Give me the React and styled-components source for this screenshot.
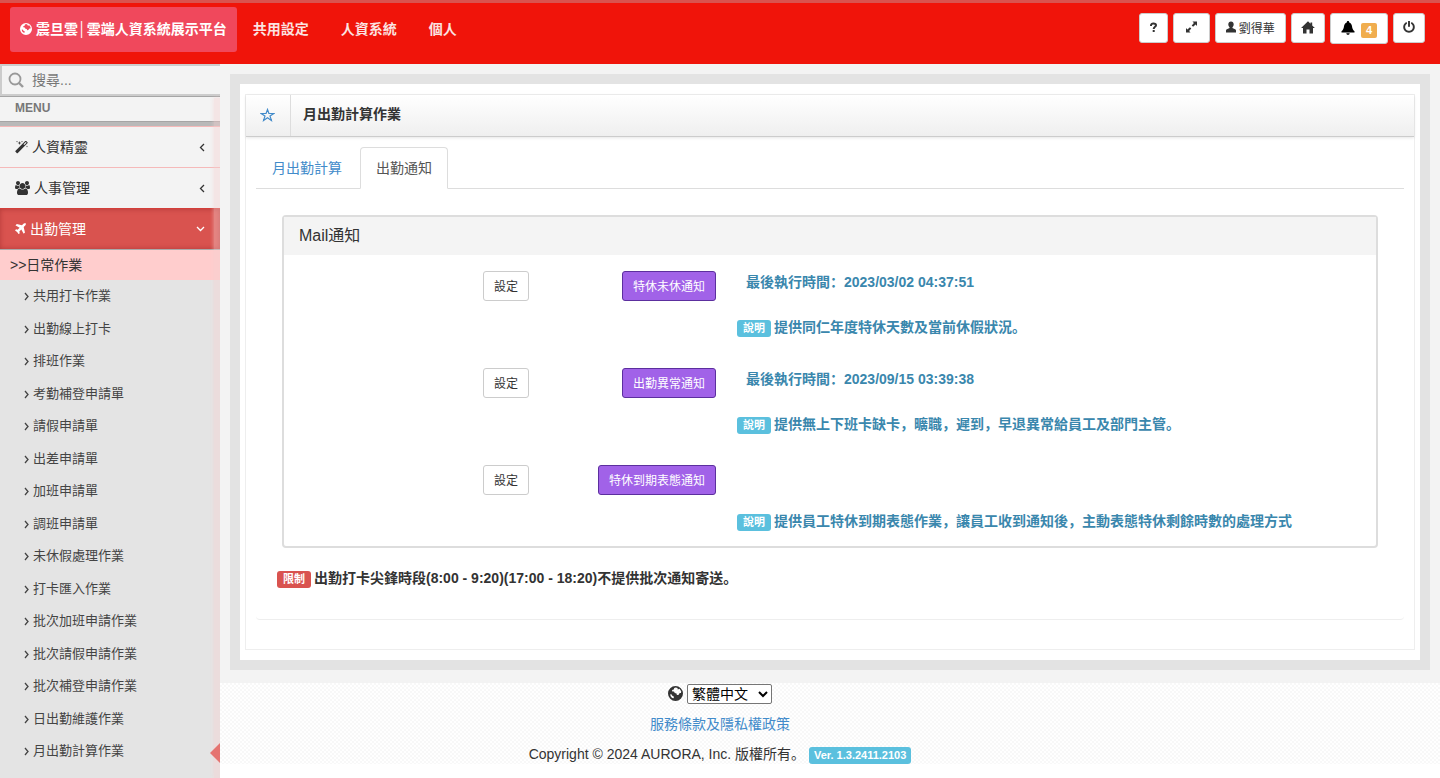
import styled, { createGlobalStyle } from 'styled-components'
import { useState } from 'react'

const GlobalStyle = createGlobalStyle`
  * {
    box-sizing: border-box;
  }
  body {
    margin: 0;
    background: #fff;
    color: #333;
    font-family: "Liberation Sans", "Noto Sans CJK SC", sans-serif;
    font-size: 14px;
    line-height: 20px;
  }
  button, input, select {
    font-family: inherit;
  }
  a {
    color: #428bca;
    text-decoration: none;
  }
  ul {
    list-style: none;
    margin: 0;
    padding: 0;
  }
`

const Page = styled.div`
  height: 100vh;
  display: flex;
  flex-direction: column;
  overflow: hidden;
`

const TopBar = styled.header`
  display: flex;
  flex: none;
  justify-content: space-between;
  align-items: flex-start;
  height: 64px;
  padding: 4px 15px 0 10px;
  border-top: 3px solid #d9534f;
  background: #f0140a;
`

const TopNav = styled.nav`
  display: flex;
  align-items: center;
`

const Brand = styled.a`
  display: flex;
  align-items: center;
  gap: 4px;
  height: 45px;
  padding: 0 10px 2px;
  border-radius: 3px;
  background: #f0485c;
  color: #fff;
  font-weight: bold;
`

const NavLink = styled.a`
  padding: 0 16px 2px;
  color: #fbe3e1;
  font-weight: bold;
`

const Tools = styled.div`
  display: flex;
  align-items: flex-start;
  gap: 5px;
  padding-top: 6px;
`

const Button = styled.button`
  display: inline-flex;
  align-items: center;
  justify-content: center;
  gap: 3px;
  height: ${props => props.$tall ? 31 : 30}px;
  padding: 0 ${props => props.$pad || 9}px 2px;
  border: 1px solid ${props => props.$primary ? '#5c2f9e' : '#ccc'};
  border-radius: 3px;
  background: ${props => props.$primary ? '#a162e8' : '#fff'};
  color: ${props => props.$primary ? '#fff' : props.$tall ? '#000' : '#333'};
  font-size: 12px;
  white-space: nowrap;
  cursor: pointer;
`

const Count = styled.span`
  margin: 5px 0 0 3px;
  padding: 0 5px;
  border-radius: 2px;
  background: #f0ad4e;
  color: #fff;
  font-size: 11px;
  font-weight: bold;
  line-height: 15px;
`

const Body = styled.div`
  display: flex;
  flex: 1;
  min-height: 0;
`

const Sidebar = styled.aside`
  position: relative;
  flex: none;
  width: 220px;
  background: #e4e4e4;
`

const EdgeShade = styled.div`
  position: absolute;
  top: 34px;
  right: 0;
  bottom: 0;
  width: 6px;
  background: rgba(245, 208, 208, 0.4);
  box-shadow: 0 0 4px rgba(245, 208, 208, 0.6);
  clip-path: inset(-4px 0 0 -4px);
  pointer-events: none;
`

const Search = styled.label`
  display: flex;
  align-items: center;
  gap: 7px;
  height: 32px;
  padding-left: 6px;
  border: solid #ccc;
  border-width: 2px 0 2px 2px;
  background: #f3f3f3;

  input {
    width: 160px;
    padding: 0;
    border: 0;
    outline: 0;
    background: none;
    font-size: 14px;
  }
  input::placeholder {
    color: #777;
  }
`

const MenuTitle = styled.div`
  height: 26px;
  border: solid #a5a5a5;
  border-width: 1px 0;
  padding-left: 15px;
  background: #f3f3f3;
  color: #777;
  font-size: 12px;
  font-weight: bold;
  line-height: 23px;
`

const MenuDivider = styled.div`
  height: 4px;
  background: #b9b9b9;
`

const MenuButton = styled.button`
  display: flex;
  align-items: center;
  gap: 4px;
  width: 100%;
  height: 41px;
  padding: 0 15px;
  border: 0;
  border-top: 1px solid ${props => props.$open ? '#d43f3a' : '#f5b9b9'};
  background: ${props => props.$open ? '#d9534f' : '#f3f3f3'};
  box-shadow: ${props => props.$open ? 'inset 0 0 5px rgba(120, 20, 20, 0.4)' : 'none'};
  color: ${props => props.$open ? '#fff' : '#333'};
  font-size: 14px;
  line-height: 20px;
  text-align: left;
  cursor: pointer;

  span {
    flex: 1;
  }
`

const GroupTitle = styled.div`
  height: 31px;
  padding-left: 10px;
  border-top: 1px solid #aaa;
  background: #ffcdcd;
  line-height: 31px;
`

const SubLink = styled.a`
  display: flex;
  align-items: center;
  gap: 4px;
  height: 20px;
  margin-bottom: ${props => props.$short ? 12 : 13}px;
  padding-left: 24px;
  color: #444;
  font-size: 13px;
`

const SubMenu = styled.ul`
  padding-top: 6px;
`

const Pointer = styled.div`
  position: absolute;
  right: 0;
  bottom: 15px;
  border: solid transparent;
  border-width: 10px 10px 10px 0;
  border-right-color: #e57370;
`

const Main = styled.main`
  flex: 1;
  min-width: 0;
`

const Content = styled.div`
  padding: 10px 10px 13px;
  background: #f3f3f3;
`

const Frame = styled.div`
  padding: 10px 5px;
  border: 10px solid #e3e3e3;
  background: #fff;
`

const Widget = styled.section`
  border: 1px solid #eee;
  padding-bottom: 29px;
`

const WidgetHeader = styled.header`
  display: flex;
  height: 42px;
  border-bottom: 1px solid #ccc;
  background: linear-gradient(#fff, #efefef);
  box-shadow: 0 1px 3px rgba(0, 0, 0, 0.1);
`

const StarButton = styled.button`
  display: flex;
  align-items: center;
  justify-content: center;
  width: 45px;
  padding: 0 2px 2px 0;
  border: 0;
  border-right: 1px solid #ddd;
  background: none;
  color: #428bca;
  cursor: pointer;
`

const WidgetTitle = styled.h1`
  margin: 0;
  padding-left: 12px;
  font-size: 14px;
  line-height: 38px;
`

const Tabs = styled.div`
  display: flex;
  margin: 10px 10px 0;
  border-bottom: 1px solid #ddd;
`

const Tab = styled.button`
  height: 42px;
  margin: 0 2px -1px 0;
  padding: 0 15px 2px;
  border: 1px solid ${props => props.$active ? '#ddd' : 'transparent'};
  border-bottom-color: ${props => props.$active ? '#fff' : 'transparent'};
  border-radius: 4px 4px 0 0;
  background: ${props => props.$active ? '#fff' : 'none'};
  color: ${props => props.$active ? '#555' : '#428bca'};
  font-size: 14px;
  cursor: pointer;
`

const TabBody = styled.div`
  margin: 0 10px;
  padding: 26px 26px 31px;
  border-bottom: 1px solid #eee;
  border-radius: 0 0 4px 4px;
`

const Panel = styled.section`
  border: 2px solid #ddd;
  border-radius: 4px;
`

const PanelTitle = styled.h2`
  margin: 0;
  padding: 0 15px;
  background: #f4f4f4;
  font-size: 16px;
  font-weight: normal;
  line-height: 38px;
`

const NoticeRow = styled.div`
  display: grid;
  grid-template-columns: 245px 187px 1fr;
  height: 97px;
  padding-top: 16px;
`

const Cell = styled.div`
  display: flex;
  align-items: flex-start;
  justify-content: flex-end;
`

const Info = styled.div`
  padding-left: 21px;
  color: #3a87ad;
  font-weight: bold;
`

const LastRun = styled.p`
  height: 20px;
  margin: 1px 0 25px 9px;
`

const Description = styled.p`
  margin: 0;
`

const Label = styled.span`
  display: inline-block;
  margin-right: ${props => props.$version ? 0 : 3}px;
  padding: 0 ${props => props.$version ? 5 : 6}px;
  border-radius: 3px;
  background: ${props => props.$danger ? '#d9534f' : '#5bc0de'};
  color: #fff;
  font-size: 11px;
  font-weight: bold;
  line-height: 17px;
`

const Limit = styled.p`
  margin: 20px 0 0 -5px;
  font-weight: bold;
`

const Footer = styled.footer`
  display: flex;
  flex-direction: column;
  align-items: center;
  gap: 10px;
  padding-right: 220px;
  background: repeating-conic-gradient(#f8f8f8 0 25%, #fff 0 50%) 0 0 / 4px 4px;
`

const Language = styled.label`
  display: flex;
  align-items: center;
  gap: 4px;
  height: 21px;

  select {
    width: 85px;
    height: 20px;
    padding: 0;
    border: 1px solid #767676;
    border-radius: 2px;
    background: #fff;
    color: #000;
    font-size: 14px;
  }
`

const ICONS = {
  magic: { width: 13, height: 13, viewBox: '64 64 1664 1664', path: 'M1254 581l293-293-107-107-293 293zm447-293q0 27-18 45l-1286 1286q-18 18-45 18t-45-18l-198-198q-18-18-18-45t18-45l1286-1286q18-18 45-18t45 18l198 198q18 18 18 45zm-1351-190l98 30-98 30-30 98-30-98-98-30 98-30 30-98zm350 162l196 60-196 60-60 196-60-196-196-60 196-60 60-196zm930 478l98 30-98 30-30 98-30-98-98-30 98-30 30-98zm-640-640l98 30-98 30-30 98-30-98-98-30 98-30 30-98z' },
  users: { width: 15, height: 14, viewBox: '0 0 1920 1792', path: 'M593 896q-162 5-265 128h-134q-82 0-138-40.500t-56-118.500q0-353 124-353 6 0 43.500 21t97.500 42.500 119 21.500q67 0 133-23-5 37-5 66 0 139 81 256zm1071 637q0 120-73 189.500t-194 69.500h-874q-121 0-194-69.500t-73-189.500q0-53 3.500-103.500t14-109 26.500-108.500 43-97.500 62-81 85.500-53.500 111.500-20q10 0 43 21.500t73 48 107 48 135 21.500 135-21.500 107-48 73-48 43-21.500q61 0 111.500 20t85.500 53.500 62 81 43 97.500 26.500 108.500 14 109 3.500 103.500zm-1024-1277q0 106-75 181t-181 75-181-75-75-181 75-181 181-75 181 75 75 181zm704 384q0 159-112.500 271.500t-271.500 112.500-271.500-112.500-112.500-271.500 112.500-271.500 271.500-112.500 271.500 112.500 112.500 271.500zm576 225q0 78-56 118.500t-138 40.500h-134q-103-123-265-128 81-117 81-256 0-29-5-66 66 23 133 23 59 0 119-21.500t97.500-42.500 43.500-21q124 0 124 353zm-128-609q0 106-75 181t-181 75-181-75-75-181 75-181 181-75 181 75 75 181z' },
  plane: { width: 11, height: 12, viewBox: '186 120 1422 1536', path: 'M1568 160q44 52 12 148t-108 172l-161 161 160 696q5 19-12 33l-128 96q-7 6-19 6-4 0-7-1-15-3-21-16l-279-508-259 259 53 194q5 17-8 31l-96 96q-9 9-23 9h-2q-15-2-24-13l-189-252-252-189q-11-7-13-23-1-13 9-25l96-97q9-9 23-9 6 0 8 1l194 53 259-259-508-279q-14-8-17-24-2-16 9-27l128-128q14-13 30-8l665 159 160-160q76-76 172-108t148 12z' },
  power: { width: 12, height: 12, viewBox: '100 100 1592 1592', path: 'M1664 896q0 156-61 298t-164 245-245 164-298 61-298-61-245-164-164-245-61-298q0-182 80.500-343t226.500-270q43-32 95.500-25t83.500 50q32 42 24.500 94.500t-49.500 84.500q-98 74-151.500 181t-53.500 228q0 104 40.500 198.500t109.500 163.500 163.500 109.500 198.500 40.500 198.500-40.500 163.500-109.500 109.500-163.500 40.500-198.500q0-121-53.500-228t-151.500-181q-42-32-49.500-84.500t24.500-94.500q31-43 84-50t95 25q146 109 226.500 270t80.500 343zm-640-768v640q0 52-38 90t-90 38-90-38-38-90v-640q0-52 38-90t90-38 90 38 38 90z' },
  user: { width: 10, height: 12, viewBox: '0 0 10 12', path: 'M5 .5c1.600 0 2.700 1.200 2.700 2.800 0 1.300-.6 2.500-1.300 3.200v.5l2.700 1.200c.6.300.9.700.9 1.300V11.500H0V9.500c0-.6.300-1 .9-1.300l2.700-1.200v-.5C2.900 5.800 2.300 4.600 2.300 3.300 2.300 1.700 3.400.5 5 .5z' },
  home: { width: 14, height: 13, viewBox: '0 0 14 13', path: 'M7 .3l2.500 2.400V1.500h1.700v2.900L13.900 7H12v5.500H8.500V8.500h-3v4H2V7H.1z' },
  bell: { width: 14, height: 14, viewBox: '0 0 14 14', path: 'M7 0c.7 0 1.200.5 1.200 1.200v.3c1.700.5 2.500 2 2.800 3.800.3 2.400.8 3.500 2.500 5v1.200H.5v-1.200c1.700-1.500 2.200-2.600 2.500-5 .3-1.800 1.100-3.300 2.800-3.800v-.3C5.800.5 6.300 0 7 0zM5.300 12.200h3.400c-.2 1-.8 1.500-1.700 1.500s-1.500-.5-1.700-1.500z' },
  expand: { width: 13, height: 12, viewBox: '0 0 13 12', path: 'M7.500.5H12V5l-1.400-1.400-2.500 2.200-1.400-1.400L8.900 2zM5.500 11.500H1V7l1.400 1.400 2.500-2.200 1.400 1.400L4.100 10z' },
  globe: { width: 15, height: 15, viewBox: '0 0 15 15', path: 'M7.500 0a7.500 7.500 0 1 1 0 15 7.500 7.500 0 0 1 0-15zM7.800 1.400L6.200 2l-.4 1.400-1.800.6.300 1.400 1.600.2.900 1.500 1.700.5.400 1.500 1.500-.2 1.300-1.900 1.300.1.200-1.900-1.700-2.400-1.600.6-.5-1.300zM2.200 8.200l.4 2 1.500 1.700 1.500.3.400-1.500-1.700-1-.6-1.200z' },
}

const Icon = ({ name, size }) => {
    const { width, height, viewBox, path } = ICONS[name]
    return (
        <svg width={size || width} height={size || height} viewBox={viewBox} fill="currentColor" fillRule="evenodd" aria-hidden="true">
            <path d={path}/>
        </svg>
    )
}

const CHEVRONS = {
  left: [6, 9, 'M5 1L1.500 4.500 5 8'],
  right: [5, 9, 'M1 1l3 3.500L1 8'],
  down: [9, 6, 'M1 1l3.500 3.500L8 1'],
}

const Chevron = ({ to }) => {
    const [width, height, path] = CHEVRONS[to]
    return (
        <svg width={width} height={height} viewBox={`0 0 ${width} ${height}`} fill="none" stroke="currentColor" strokeWidth="1.300" aria-hidden="true">
            <path d={path}/>
        </svg>
    )
}

const SearchIcon = () => (
    <svg width="17" height="17" viewBox="0 0 17 17" fill="none" stroke="#999" aria-hidden="true">
        <circle cx="7" cy="7" r="5.500" strokeWidth="1.800"/>
        <path d="M11 11l4 4" strokeWidth="2.400"/>
    </svg>
)

const QuestionIcon = () => (
    <svg width="9" height="12" viewBox="0 0 9 12" fill="none" stroke="currentColor" strokeWidth="2" aria-hidden="true">
        <path d="M2 5V4.500c0-1.300 1-2 2.300-2S7 3.100 7 4.300C7 5.900 4.700 5.700 4.700 8"/>
        <path d="M3.700 10h2"/>
    </svg>
)

const StarIcon = () => (
    <svg width="15" height="14" viewBox="0 0 15 14" fill="none" stroke="currentColor" strokeWidth="1.200" aria-hidden="true">
        <path d="M7.500 1.500l1.400 4h4.900L10 8l1.400 4.400-3.900-2.700-3.900 2.700L5 8 1.200 5.500h4.900z"/>
    </svg>
)

const subItems = [
    '共用打卡作業', '出勤線上打卡', '排班作業', '考勤補登申請單', '請假申請單',
    '出差申請單', '加班申請單', '調班申請單', '未休假處理作業', '打卡匯入作業',
    '批次加班申請作業', '批次請假申請作業', '批次補登申請作業', '日出勤維護作業', '月出勤計算作業',
]

const notices = [
    { name: '特休未休通知', time: '2023/03/02 04:37:51', text: '提供同仁年度特休天數及當前休假狀況。' },
    { name: '出勤異常通知', time: '2023/09/15 03:39:38', text: '提供無上下班卡缺卡，曠職，遲到，早退異常給員工及部門主管。' },
    { name: '特休到期表態通知', text: '提供員工特休到期表態作業，讓員工收到通知後，主動表態特休剩餘時數的處理方式' },
]

const Header = () => (
    <TopBar>
        <TopNav>
            <Brand href="#"><Icon name="globe" size={12}/>震旦雲│雲端人資系統展示平台</Brand>
            <NavLink href="#">共用設定</NavLink>
            <NavLink href="#">人資系統</NavLink>
            <NavLink href="#">個人</NavLink>
        </TopNav>
        <Tools>
            <Button aria-label="help"><QuestionIcon/></Button>
            <Button $pad={11} aria-label="fullscreen"><Icon name="expand"/></Button>
            <Button $pad={10}><Icon name="user"/>劉得華</Button>
            <Button aria-label="home"><Icon name="home"/></Button>
            <Button $pad={10} $tall aria-label="notifications"><Icon name="bell"/><Count>4</Count></Button>
            <Button aria-label="logout"><Icon name="power"/></Button>
        </Tools>
    </TopBar>
)

const SideMenu = () => (
    <Sidebar>
        <Search>
            <SearchIcon/>
            <input type="text" placeholder="搜尋..." aria-label="搜尋"/>
        </Search>
        <MenuTitle>MENU</MenuTitle>
        <MenuDivider/>
        <MenuButton><Icon name="magic"/><span>人資精靈</span><Chevron to="left"/></MenuButton>
        <MenuButton><Icon name="users"/><span>人事管理</span><Chevron to="left"/></MenuButton>
        <MenuButton $open><Icon name="plane"/><span>出勤管理</span><Chevron to="down"/></MenuButton>
        <GroupTitle>&gt;&gt;日常作業</GroupTitle>
        <SubMenu>
            {subItems.map((item, index) => (
                <li key={item}>
                    <SubLink href="#" $short={index % 2 === 1}><Chevron to="right"/>{item}</SubLink>
                </li>
            ))}
        </SubMenu>
        <EdgeShade/>
        <Pointer/>
    </Sidebar>
)

const App = () => {
    const [activeTab, setActiveTab] = useState('出勤通知')

    return (
        <Page>
            <GlobalStyle/>
            <Header/>
            <Body>
                <SideMenu/>
                <Main>
                    <Content>
                        <Frame>
                            <Widget>
                                <WidgetHeader>
                                    <StarButton aria-label="favorite"><StarIcon/></StarButton>
                                    <WidgetTitle>月出勤計算作業</WidgetTitle>
                                </WidgetHeader>
                                <Tabs role="tablist">
                                    {['月出勤計算', '出勤通知'].map(tab => (
                                        <Tab key={tab} role="tab" aria-selected={tab === activeTab} $active={tab === activeTab} onClick={() => setActiveTab(tab)}>{tab}</Tab>
                                    ))}
                                </Tabs>
                                <TabBody>
                                    <Panel>
                                        <PanelTitle>Mail通知</PanelTitle>
                                        {notices.map(notice => (
                                            <NoticeRow key={notice.name}>
                                                <Cell><Button $pad={10}>設定</Button></Cell>
                                                <Cell><Button $pad={10} $primary>{notice.name}</Button></Cell>
                                                <Info>
                                                    <LastRun>{notice.time && `最後執行時間：${notice.time}`}</LastRun>
                                                    <Description><Label>說明</Label>{notice.text}</Description>
                                                </Info>
                                            </NoticeRow>
                                        ))}
                                    </Panel>
                                    <Limit><Label $danger>限制</Label>出勤打卡尖鋒時段(8:00 - 9:20)(17:00 - 18:20)不提供批次通知寄送。</Limit>
                                </TabBody>
                            </Widget>
                        </Frame>
                    </Content>
                    <Footer>
                        <Language>
                            <Icon name="globe"/>
                            <select aria-label="語言"><option>繁體中文</option></select>
                        </Language>
                        <a href="#">服務條款及隱私權政策</a>
                        <div>Copyright © 2024 AURORA, Inc. 版權所有。 <Label $version>Ver. 1.3.2411.2103</Label></div>
                    </Footer>
                </Main>
            </Body>
        </Page>
    )
}

export default App
